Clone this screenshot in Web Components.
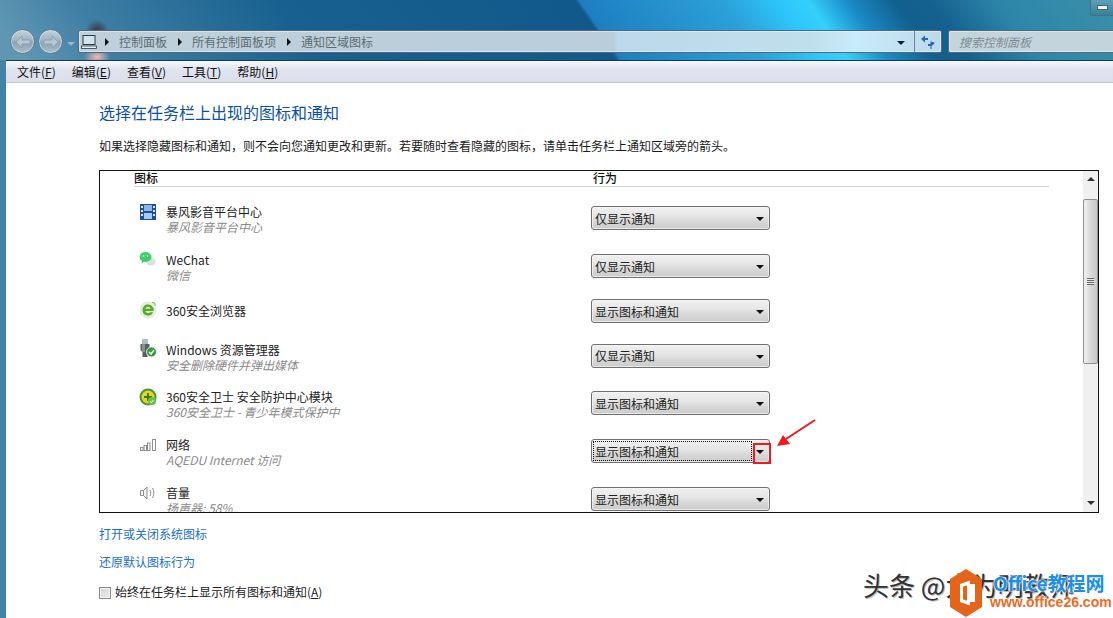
<!doctype html>
<html lang="zh">
<head>
<meta charset="utf-8">
<title>通知区域图标</title>
<style>
	html, body { margin: 0; width: 1113px; height: 618px; overflow: hidden; background: #fff; }
	body { font: 12px "Noto Sans CJK SC", "Noto Sans", sans-serif; color: #1a1a1a; }
</style>
</head>
<body>
<control-window></control-window>
<script>
const FONT = `"Noto Sans CJK SC", "Noto Sans", sans-serif`

const ICONS = {
	film: `<svg width="18" height="18" viewBox="0 0 18 18"><rect x="1" y="1" width="16" height="16" fill="#1d4f9c"/><rect x="5" y="2" width="8" height="6" fill="#8db4e2"/><rect x="5" y="10" width="8" height="6" fill="#a9c7ea"/><g fill="#dbe8f7"><rect x="2" y="3" width="2" height="2"/><rect x="2" y="7" width="2" height="2"/><rect x="2" y="11" width="2" height="2"/><rect x="14" y="3" width="2" height="2"/><rect x="14" y="7" width="2" height="2"/><rect x="14" y="11" width="2" height="2"/></g></svg>`,
	wechat: `<svg width="18" height="18" viewBox="0 0 18 18"><ellipse cx="12" cy="10.500" rx="5" ry="4" fill="#dfe2df"/><ellipse cx="6.500" cy="6" rx="6" ry="5" fill="#3bd06a"/><path d="M3 9.500l-.5 3 3-2z" fill="#3bd06a"/><circle cx="4.500" cy="5" r=".9" fill="#fff"/><circle cx="8.500" cy="5" r=".9" fill="#fff"/></svg>`,
	browser: `<svg width="18" height="18" viewBox="0 0 18 18"><circle cx="9" cy="9" r="8.500" fill="#e4ecdf"/><path d="M9 3.500a5.500 5.500 0 1 0 5 7.800h-2.800a3 3 0 0 1-5-1.300H14.600a5.500 5.500 0 0 0-5.600-6.500zM6.300 7.800a2.800 2.800 0 0 1 5.400 0z" fill="#4fae1e"/><path d="M13 1.500c2.500 0 3.500 1 3 3" fill="none" stroke="#7cc24a" stroke-width="1.200"/></svg>`,
	usb: `<svg width="18" height="20" viewBox="0 0 18 20"><rect x="3" y="0" width="6" height="5" fill="#b9bcbc"/><path d="M1.500 5h9v6l-2 2v5h-5v-5l-2-2z" fill="#5a6062"/><path d="M3 5h3v8H3z" fill="#8a9090"/><circle cx="12.500" cy="13" r="5" fill="#2f9a3a" stroke="#fff" stroke-width=".8"/><path d="M10 13l2 2 3-4" fill="none" stroke="#fff" stroke-width="1.500"/></svg>`,
	guard: `<svg width="18" height="18" viewBox="0 0 18 18"><circle cx="9" cy="9" r="8.500" fill="#3f9a2c"/><circle cx="9" cy="9" r="6.500" fill="#f0d21e"/><path d="M8 5h2v3h3v2h-3v3H8v-3H5V8h3z" fill="#2d7f22"/><circle cx="13" cy="13" r="4" fill="#6cc04a"/><path d="M11 13.500l1.500 1 2-2.500" fill="none" stroke="#fff" stroke-width="1"/></svg>`,
	signal: `<svg width="16" height="12" viewBox="0 0 16 12" fill="#fff" stroke="#8b8f91"><rect x=".5" y="8.500" width="2.500" height="3"/><rect x="4" y="6.500" width="2.500" height="5"/><rect x="7.500" y="4" width="2.500" height="7.500"/><rect x="12.500" y=".5" width="3" height="11"/></svg>`,
	speaker: `<svg width="16" height="14" viewBox="0 0 16 14" fill="none" stroke="#8b8f91"><path d="M.5 4.500h3v5h-3z" fill="#f4f4f4"/><path d="M3.500 4.500l3.500-3.500v12l-3.500-3.500z" fill="#f4f4f4"/><path d="M10 4c1 1.800 1 4.200 0 6M12.500 2c1.800 3 1.800 7 0 10"/></svg>`,
}

class GlassButton extends HTMLElement {
	constructor() {
		super()
		let flip = this.hasAttribute( "forward" ) ? "scale(-1 1) translate(-16 0)" : ""
		this.attachShadow({ mode: "open" }).innerHTML = `<style>
				:host {
					display: grid; place-items: center;
					width: 25px; height: 25px;
					border-radius: 50%;
					box-sizing: border-box;
					border: 1px solid #5d7f93;
					background: linear-gradient( #c5d3da, #9ab3c0 48%, #87a3b3 52%, #a9bfca );
					box-shadow: inset 0 0 0 1px #d8e3e8aa;
					}
			</style>
			<svg width="16" height="14" viewBox="0 0 16 14"><path transform="${flip}" d="M1 7l6-6v4h8v4H7v4z" fill="#b8c8d1" stroke="#8aa2af"/></svg>`
	}
	static { customElements.define( "glass-button", this ) }
}

class NavBar extends HTMLElement {
	constructor() {
		super()
		this.attachShadow({ mode: "open" }).innerHTML = `<style>
				:host {
					display: flex; align-items: center;
					padding: 0 0 0 10px;
					height: 27px;
					font: 12px ${FONT};
					color: #5c6b74;
					}
				.back { display: flex; gap: 3px; }
				.drop { width: 0; height: 0; margin: 4px 3px 0 4px; border: 4px solid transparent; border-top: 4px solid #9fb7c4; border-bottom: 0; }
				.field {
					display: flex; align-items: center;
					box-sizing: border-box; height: 23px;
					border: 1px solid #4e6a7c;
					box-shadow: inset 0 0 0 1px #e6eef2aa;
					border-radius: 2px;
					}
				.address {
					flex: none; width: 864px;
					background: linear-gradient( 90deg, #bfd0da, #b9cddb 62%, #bcd8ea 62.500%, #c0dfec 85%, #c8ebfa 90%, #bcd9e8 );
					}
				.crumbs { display: flex; align-items: center; flex: 1; padding-left: 2px; }
				.crumbs span { padding: 0 11px 0 10px; }
				.crumbs i { width: 0; height: 0; border: 4px solid transparent; border-left: 4px solid #111; border-right: 0; }
				.caret { width: 0; height: 0; border: 4px solid transparent; border-top: 4px solid #0c1c40; border-bottom: 0; margin: 3px 9px 0 0; }
				.refresh { display: grid; place-items: center; width: 26px; height: 21px; border-left: 1px solid #6b8596; }
				.search {
					flex: none; width: 170px; margin-left: 6px;
					padding-left: 10px;
					background: #c3d4dc;
					color: #7e8b92; font-style: italic;
					border-right: 0;
					}
			</style>
			<div class="back"><glass-button></glass-button><glass-button forward></glass-button></div>
			<div class="drop"></div>
			<div class="field address">
				<div class="crumbs">
					<svg width="16" height="14" viewBox="0 0 16 14"><rect x="2" y=".5" width="12" height="9" fill="#d7e3ea" stroke="#2b3a44"/><rect x=".5" y="11" width="15" height="2.500" fill="#e8eef1" stroke="#2b3a44" stroke-width=".8"/></svg>
					<i style="margin-left:8px"></i><span>控制面板</span>
					<i></i><span>所有控制面板项</span>
					<i></i><span>通知区域图标</span>
				</div>
				<div class="caret"></div>
				<div class="refresh">
					<svg width="14" height="14" viewBox="0 0 14 14" fill="#2a66b0"><path d="M0 4l4-3.500V3h3v2H4v2.500zM14 8l-3.500 3V14h-1V11H7V9h2.500V6.500h1z"/></svg>
				</div>
			</div>
			<div class="field search">搜索控制面板</div>`
	}
	static { customElements.define( "nav-bar", this ) }
}

class MenuBar extends HTMLElement {
	constructor() {
		super()
		let items = [ ["文件","F"], ["编辑","E"], ["查看","V"], ["工具","T"], ["帮助","H"] ]
		this.attachShadow({ mode: "open" }).innerHTML = `<style>
				:host {
					display: flex; align-items: center; gap: 16px;
					height: 23px; padding-left: 11px;
					box-sizing: border-box;
					border-top: 1px solid #17384e;
					border-bottom: 1px solid #c3c8d4;
					background: linear-gradient( #f6f7fb, #dfe3ee 45%, #dcdfeb );
					font: 12px ${FONT};
					color: #111;
					}
				u { text-underline-offset: 1px; }
			</style>
			${items.map( ([name, key]) => `<span>${name}(<u>${key}</u>)</span>` ).join( "" )}`
	}
	static { customElements.define( "menu-bar", this ) }
}

class ComboBox extends HTMLElement {
	constructor() {
		super()
		this.attachShadow({ mode: "open" }).innerHTML = `<style>
				:host {
					display: flex; align-items: center; justify-content: space-between;
					position: relative;
					box-sizing: border-box;
					width: 179px; height: 24px;
					padding: 0 5px 0 3px;
					border: 1px solid #707070;
					border-radius: 3px;
					background: linear-gradient( #f0f0f0, #e6e6e6 40%, #d6d6d6 70%, #cbcbcb );
					box-shadow: inset 0 0 0 1px #f8f8f8aa;
					font: 12px ${FONT};
					color: #222;
					}
				:host([focused])::before {
					content: ""; position: absolute; left: 1px; top: 1px; bottom: 1px; right: 17px;
					border: 1px dotted #111;
					}
				i { width: 0; height: 0; border: 4px solid transparent; border-top: 4px solid #111; border-bottom: 0; margin-top: 2px; }
			</style>
			<slot></slot><i></i>`
	}
	static { customElements.define( "combo-box", this ) }
}

class TrayRow extends HTMLElement {
	constructor() {
		super()
		let note = this.getAttribute( "note" )
		this.attachShadow({ mode: "open" }).innerHTML = `<style>
				:host {
					display: grid;
					grid-template-columns: 18px 416px auto;
					column-gap: 9px;
					align-items: center;
					height: var( --row, 48px );
					padding-left: 39px;
					font: 12px ${FONT};
					}
				.icon { display: grid; place-items: center; height: 20px; margin-top: -13px; }
				:host([single]) .icon { margin-top: -2px; }
				.text { display: grid; line-height: 15px; margin-top: 2px; }
				:host([single]) .text { margin-top: -2px; }
				.name { color: #222; }
				.note { color: #8a8a8a; font-style: italic; }
			</style>
			<div class="icon">${ICONS[ this.getAttribute( "icon" ) ]}</div>
			<div class="text">
				<span class="name">${this.getAttribute( "name" )}</span>
				${note ? `<span class="note">${note}</span>` : ""}
			</div>
			<slot></slot>`
	}
	static { customElements.define( "tray-row", this ) }
}

class ScrollBar extends HTMLElement {
	constructor() {
		super()
		this.attachShadow({ mode: "open" }).innerHTML = `<style>
				:host {
					display: grid; grid-template-rows: 28px 165px 1fr 17px;
					justify-items: center;
					width: 15px;
					background: #f0f0f0;
					}
				.arrow { width: 0; height: 0; border: 4px solid transparent; }
				.up { border-bottom: 4px solid #333; border-top: 0; margin-top: 6px; }
				.down { border-top: 4px solid #333; border-bottom: 0; margin-top: 6px; }
				.thumb {
					display: grid; place-items: center;
					box-sizing: border-box; width: 15px;
					border: 1px solid #8f8f8f; border-radius: 2px;
					background: linear-gradient( 90deg, #f1f1f1, #d9d9d9 50%, #c8c8c8 );
					}
				.grip { width: 7px; height: 7px; background: repeating-linear-gradient( #666 0 1px, #e8e8e8 1px 2px ); }
			</style>
			<div class="arrow up"></div>
			<div class="thumb"><div class="grip"></div></div>
			<div></div>
			<div class="arrow down"></div>`
	}
	static { customElements.define( "scroll-bar", this ) }
}

class IconList extends HTMLElement {
	constructor() {
		super()
		this.attachShadow({ mode: "open" }).innerHTML = `<style>
				:host {
					display: grid; grid-template-columns: 1fr 15px;
					box-sizing: border-box;
					width: 1000px; height: 343px;
					border: 1px solid #111;
					font: 12px ${FONT};
					}
				.head {
					display: grid; grid-template-columns: 459px 1fr;
					margin: 0 34px;
					height: 15px;
					line-height: 14px;
					border-bottom: 1px solid #d5d5d5;
					color: #111;
					font-weight: 500;
					}
				.rows { overflow: hidden; height: 318px; padding-top: 7px; }
				scroll-bar { height: 341px; }
			</style>
			<div>
				<div class="head"><span>图标</span><span>行为</span></div>
				<div class="rows"><slot></slot></div>
			</div>
			<scroll-bar></scroll-bar>`
	}
	static { customElements.define( "icon-list", this ) }
}

class WatermarkStamp extends HTMLElement {
	constructor() {
		super()
		this.attachShadow({ mode: "open" }).innerHTML = `<style>
				:host {
					position: absolute; left: 863px; top: 566px; width: 250px; height: 52px;
					font-family: ${FONT};
					}
				.toutiao {
					position: absolute; left: 0; top: 2px;
					font-size: 26px; line-height: 34px; white-space: nowrap;
					color: #333; text-shadow: 1px 1px 0 #bbb;
					}
				svg { position: absolute; left: 87px; top: 3px; }
				.brand {
					position: absolute; left: 130px; top: 5px;
					font-size: 19px; line-height: 24px; font-weight: 700; white-space: nowrap;
					color: #1a8fe8;
					text-shadow: 0 0 1px #fff, 0 0 2px #fff, 0 0 2px #fff;
					}
				.site {
					position: absolute; left: 127px; top: 28px;
					font: 700 14px/16px "Liberation Sans", sans-serif; white-space: nowrap;
					color: #ee6a1e;
					text-shadow: 0 0 1px #fff, 0 0 2px #fff;
					}
			</style>
			<div class="toutiao">头条 @大为明教师</div>
			<svg width="32" height="48" viewBox="0 0 32 48"><path d="M16 0l16 10v28L16 48 0 38V10z" fill="#e5641a"/><path d="M10 15l10-3.500v25L10 33zM20 15h5v18h-5" fill="#fff"/><path d="M13 17.500l4-1v15l-4-1z" fill="#e5641a"/></svg>
			<div class="brand">Office教程网</div>
			<div class="site">www.office26.com</div>`
	}
	static { customElements.define( "watermark-stamp", this ) }
}

class ControlWindow extends HTMLElement {
	constructor() {
		super()
		this.attachShadow({ mode: "open" }).innerHTML = `<style>
				:host {
					display: flex; flex-direction: column;
					position: relative;
					width: 1113px; height: 618px;
					overflow: hidden;
					font: 12px ${FONT};
					background-color: #4582a5;
					background-repeat: no-repeat;
					background-size: 100% 100%, 100% 100%, 100% 60px;
					background-image:
						radial-gradient( 13px 9px at 97px 57px, #f6b9b0, #0000 ),
						radial-gradient( 12px 14px at 97px 33px, #3a2a30, #0000 ),
						linear-gradient( 55deg, #5f97b3 2%, #3f7fa5 10%, #17608f 28%, #11598a 53.400%, #1e7fc0 53.800%, #2ba0d8 66%, #2cc6fb 71%, #35cffb 73.500%, #1a8ac6 77%, #12608f 81%, #14608f 84%, #2d86aa 90%, #3a8fa8 );
					}
				.caption { display: flex; justify-content: flex-end; height: 28px; }
				.min {
					box-sizing: border-box; display: grid; place-items: center;
					width: 24px; height: 16px; margin-right: -1px;
					border: 1px solid #3e7285; border-top: 0; border-right: 0; border-bottom-left-radius: 3px;
					background: linear-gradient( #5ea0b9, #3a8099 );
					}
				.min::after { content: ""; width: 9px; height: 3px; background: #f2f2f2; border: 1px solid #48606c; }
				.strip { height: 5px; }
				.client {
					flex: 1; display: flex; flex-direction: column;
					margin-left: 6px;
					background: #fff;
					}
				.page { padding: 17px 0 0 93px; }
				h1 { margin: 0; font: 400 16px/24px ${FONT}; color: #0b4fa8; }
				p { margin: 13px 0 15px; line-height: 18px; color: #1a1a1a; }
				.links { display: grid; gap: 10px; margin-top: 12px; }
				a { color: #1b6fc8; line-height: 18px; text-decoration: none; }
				label { display: flex; align-items: center; gap: 4px; margin-top: 12px; color: #222; line-height: 18px; }
				.check {
					box-sizing: border-box; width: 12px; height: 12px; margin-top: 1px;
					border: 1px solid #8a8a8a;
					background: linear-gradient( 135deg, #d4d4d4, #ededed );
					box-shadow: inset 0 0 0 1px #f4f4f4;
					}
				u { text-underline-offset: 1px; }
				.mark { position: absolute; left: 0; top: 0; pointer-events: none; }
			</style>
			<div class="caption"><div class="min"></div></div>
			<nav-bar></nav-bar>
			<div class="strip"></div>
			<div class="client">
				<menu-bar></menu-bar>
				<div class="page">
					<h1>选择在任务栏上出现的图标和通知</h1>
					<p>如果选择隐藏图标和通知，则不会向您通知更改和更新。若要随时查看隐藏的图标，请单击任务栏上通知区域旁的箭头。</p>
					<icon-list>
						<tray-row icon="film" name="暴风影音平台中心" note="暴风影音平台中心"><combo-box>仅显示通知</combo-box></tray-row>
						<tray-row icon="wechat" name="WeChat" note="微信"><combo-box>仅显示通知</combo-box></tray-row>
						<tray-row icon="browser" name="360安全浏览器" single style="--row:42px"><combo-box>显示图标和通知</combo-box></tray-row>
						<tray-row icon="usb" name="Windows 资源管理器" note="安全删除硬件并弹出媒体" style="--row:47px"><combo-box>仅显示通知</combo-box></tray-row>
						<tray-row icon="guard" name="360安全卫士 安全防护中心模块" note="360安全卫士 - 青少年模式保护中"><combo-box>显示图标和通知</combo-box></tray-row>
						<tray-row icon="signal" name="网络" note="AQEDU Internet 访问"><combo-box focused>显示图标和通知</combo-box></tray-row>
						<tray-row icon="speaker" name="音量" note="扬声器: 58%"><combo-box>显示图标和通知</combo-box></tray-row>
					</icon-list>
					<div class="links">
						<a>打开或关闭系统图标</a>
						<a>还原默认图标行为</a>
					</div>
					<label><span class="check"></span><span>始终在任务栏上显示所有图标和通知(<u>A</u>)</span></label>
				</div>
			</div>
			<svg class="mark" width="1113" height="618" fill="none">
				<rect x="754" y="444" width="16" height="19" stroke="#f01818" stroke-width="2"/>
				<path d="M815 420L786 439" stroke="#f01818" stroke-width="2"/>
				<path d="M777 446l6-11 7 9z" fill="#f01818"/>
			</svg>
			<watermark-stamp></watermark-stamp>`
	}
	static { customElements.define( "control-window", this ) }
}
</script>
</body>
</html>
